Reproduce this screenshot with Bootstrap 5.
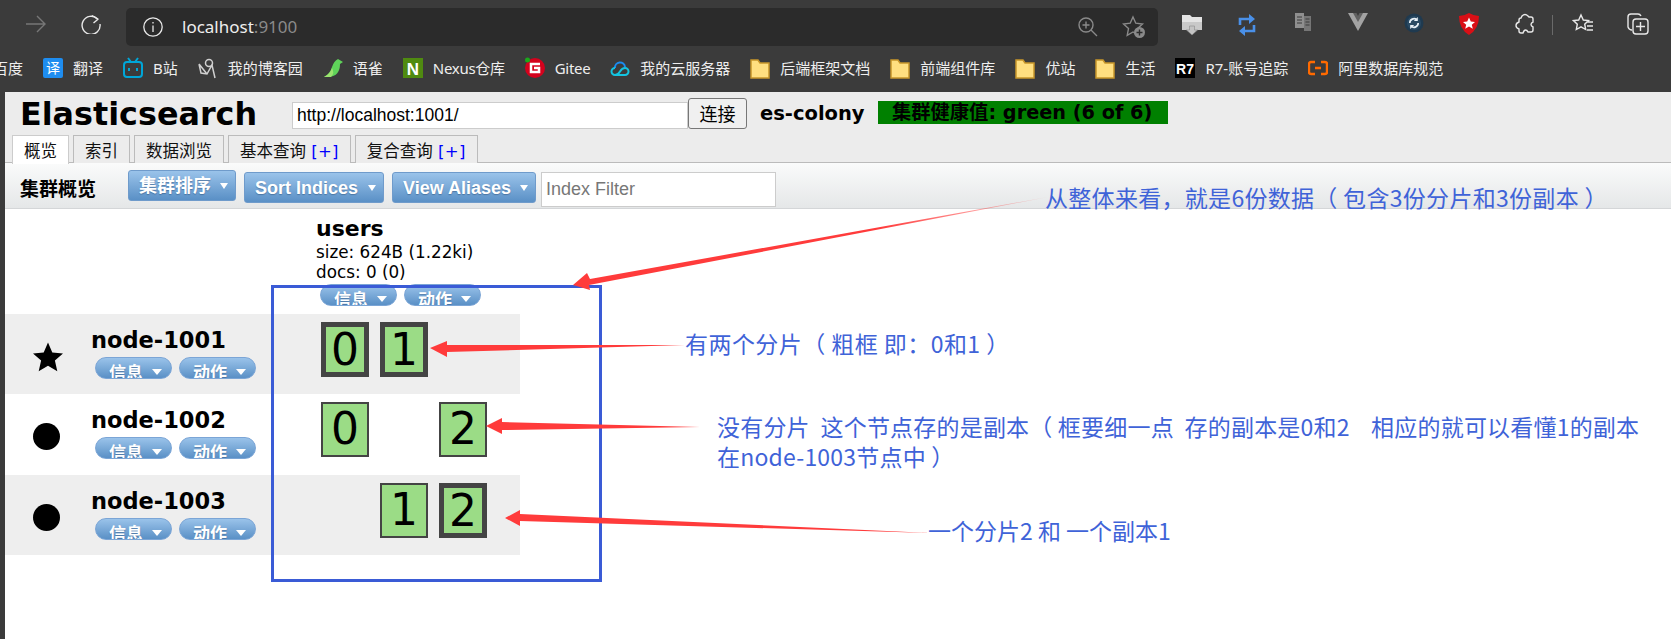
<!DOCTYPE html>
<html lang="zh-CN">
<head>
<meta charset="utf-8">
<title>Elasticsearch</title>
<link rel="stylesheet" href="https://cdn.jsdelivr.net/npm/bootstrap@5.3.0/dist/css/bootstrap.min.css">
<style>
html,body{margin:0;height:639px;overflow:hidden;background:#3b3b3b}
.stage{width:1671px;height:639px;overflow:hidden;font-family:"DejaVu Sans","Noto Sans CJK SC",sans-serif;color:#000}
.chrome{height:92px;background:#3b3b3b;color:#eee;font-family:"Noto Sans","Noto Sans CJK SC",sans-serif}
.toprow{height:47px}
.navslot{width:20px;height:20px;display:block}
.leftnav{width:126px}
.addr{width:1032px;height:38px;background:#2b2b2b;border-radius:5px;font-size:17px;margin-top:8px}
.addr .dim{color:#8a8a8a}
.extslot{width:55.5px;height:24px}
.extslot.shifted{transform:translateX(3px)}
.vsep{width:1.5px;height:20px;background:#6a6a6a;margin:0 -1px}
.bookrow{height:42px;font-size:15px;gap:20px;white-space:nowrap}
.bookrow .mk{gap:10px}
.first-mk{margin-left:-7px}
.tightword{letter-spacing:-.3px}
.bico{width:20px;height:22px;display:block;flex:none}
.pagewrap{height:547px;border-left:5px solid #3b3b3b;background:#fff}
.headzone{height:71px;background:#ececec;border-bottom:1px solid #bbb;position:relative}
.hrow{height:43px;padding-left:15px}
.brand{width:272px;margin:0;font-size:31.8px;font-weight:700;line-height:40px;font-family:"DejaVu Sans",sans-serif}
.urlbox{width:396px;height:27px;border:1px solid #ccc;background:#fff;padding:0 4px;font:17.5px "Liberation Sans",sans-serif;margin-top:3px;border-radius:0;outline:0}
.linkbtn{width:59px;height:31px;padding:0;border:1px solid #777;border-radius:3px;background:#f0f0f0;font-size:18px;line-height:26px;color:#000;margin-top:-1px;font-family:"Noto Sans CJK SC",sans-serif}
.clustername{margin-left:13px;font-size:19.5px;font-weight:700;width:105px;white-space:nowrap}
.healthbar{margin-left:13px;width:290px;height:23px;background:#008000;font-size:19.3px;font-weight:700;line-height:23px;padding-left:14px;white-space:nowrap;margin-top:-2px}
.tabline{border:0;padding-left:7px;gap:4px;height:28px;margin-bottom:-1px;flex-wrap:nowrap}
.tabline .nav-link{height:28px;padding:0 11px;font-size:16.5px;line-height:31px;margin:0;color:#111;background:#ececec;border:1px solid #bbb;border-bottom:0;border-radius:0;white-space:nowrap}
.tabline .nav-link.active{background:#fff;color:#111;height:29px;border-color:#ccc}
.tabline i{font-style:normal;color:#00f;letter-spacing:.3px}
.toolzone{height:46px;background:linear-gradient(#fafbfb,#e5e7e8);border-bottom:1px solid #d4d6d8;padding-left:15px;font-family:"Liberation Sans","Noto Sans CJK SC",sans-serif}
.tooltitle{width:108px;font-size:19px;font-weight:700;line-height:24px;margin-top:13px;white-space:nowrap;font-family:"Noto Sans CJK SC",sans-serif}
.bluebtn{height:31px;padding:1px 7px 0 10px;border:1px solid #6f9bcb;border-radius:3px;background:linear-gradient(#9ac3ea,#5a90c6);color:#fff;font-size:18px;font-weight:700;line-height:29px;text-shadow:0 1px 1px rgba(40,70,110,.45);white-space:nowrap;margin-left:8px;margin-top:9px;display:flex;align-items:center;justify-content:space-between;font-family:"Liberation Sans","Noto Sans CJK SC",sans-serif}
.bluebtn:first-of-type{margin-left:0;margin-top:7px}
.bluebtn.sortw{width:140px}
.bluebtn.sortg{width:108px}
.bluebtn.viewa{width:144px}
.bluebtn.dropdown-toggle::after{border-top:6px solid #fff;border-left:4.5px solid transparent;border-right:4.5px solid transparent;border-bottom:0;margin-left:0}
.filterbox{width:235px;height:35px;margin-left:5px;margin-top:9px;border:1px solid #ccc;background:#fff;padding:0 4px;font-size:18px;border-radius:0;outline:0}
.filterbox::placeholder{color:#777}
.idxhead{height:105px;padding-left:311px;padding-top:7px}
.idxname{font-size:22px;font-weight:700;line-height:26px}
.idxline{font-size:16.8px;line-height:20px}
.idxbtns{gap:7px;margin-top:2px;margin-left:4px}
.pillbtn{width:77px;height:22px;padding:4px 0 0 13px;border:1px solid #7ba5d6;border-radius:11px;background:linear-gradient(#9ac3ea,#5a90c6);color:#fff;font-size:17px;font-weight:700;line-height:20px;display:flex;align-items:flex-start;overflow:hidden;white-space:nowrap;text-shadow:0 1px 1px rgba(40,70,110,.4);font-family:"Noto Sans CJK SC",sans-serif}
.pillbtn.dropdown-toggle::after{border-top:6px solid #fff;border-left:5px solid transparent;border-right:5px solid transparent;border-bottom:0;margin:7px 0 0 9px;flex:none}
.noderow{height:80px;width:515px}
.noderow.tall{height:81px}
.noderow.shade{background:#eee}
.nodemark{width:86px;padding-left:28px;padding-top:28px}
.nodedot{width:27px;height:27px;border-radius:50%;background:#000;display:block;margin-top:1px}
.nodeinfo{width:230px;padding-top:11px}
.nodename{font-size:22.5px;font-weight:700;line-height:30px;white-space:nowrap}
.nodebtns{gap:7px;margin-left:4px;margin-top:2px}
.shardslots{gap:11px;padding-top:8px}
.shardbox{width:48px;height:55px;background:#9bdc86;border:2px solid #444;font-size:44px;line-height:50px;text-align:center;overflow:hidden}
.shardbox.prim{border-width:5px;line-height:45px}
.shardgap{width:48px}
.markup{position:absolute;left:0;top:0;width:1671px;height:639px;pointer-events:none}
.selframe{position:absolute;left:271px;top:285px;width:331px;height:297px;border:3px solid #3a5bd6}
.note{position:absolute;color:#3f63d8;font-family:"Noto Sans CJK SC",sans-serif;font-size:23px;line-height:30px;white-space:nowrap;margin:0}
.note1{left:1045px;top:182px;letter-spacing:.3px}
.note2{left:685px;top:328px;letter-spacing:.45px}
.note3{left:717px;top:411px;letter-spacing:.2px}
.note4{left:928px;top:515px}
.canvaswrap{position:relative;width:1671px;height:639px}
</style>
</head>
<body>
<div class="stage canvaswrap">
  <div class="chrome">
    <div class="toprow d-flex">
      <div class="leftnav d-flex align-items-center">
        <svg class="navslot" style="margin-left:26px" viewBox="0 0 20 20" fill="none" stroke="#777" stroke-width="1.4"><path d="M0 10h19M11 2l8 8-8 8"/></svg>
        <svg class="navslot" style="margin-left:35px" viewBox="0 0 20 20" fill="none" stroke="#e8e8e8" stroke-width="1.4"><path d="M16.5 5A9 9 0 1 0 19 10"/><path d="M11 1.5l6 3.700-4.500 3.800" stroke-linejoin="round" fill="none"/></svg>
      </div>
      <div class="addr d-flex align-items-center">
        <svg class="navslot" style="margin-left:17px" viewBox="0 0 20 20" fill="none" stroke="#e8e8e8" stroke-width="1.3"><circle cx="10" cy="10" r="9.200"/><path d="M10 8.500v6.500M10 5v1.500"/></svg>
        <span style="margin-left:19px">localhost<span class="dim">:9100</span></span>
        <svg class="ms-auto" width="20" height="20" viewBox="0 0 20 20" fill="none" stroke="#8a8a8a" stroke-width="1.4" style="margin-right:24px"><circle cx="8" cy="8" r="7"/><path d="M4.500 8h7M8 4.500v7M13 13l6 6"/></svg>
        <svg width="24" height="24" viewBox="0 0 24 24" fill="none" stroke="#8a8a8a" stroke-width="1.4" style="margin-right:12px"><path d="M11 2l2.800 6.200 6.700.8-4.900 4.600 1.200 6.700-5.800-3.300-5.800 3.300 1.300-6.700L1.500 9l6.700-.8z"/><circle cx="17.500" cy="17.500" r="5.500" fill="#8a8a8a" stroke="none"/><path d="M14.500 17.500h6M17.500 14.500v6" stroke="#2b2b2b"/></svg>
      </div>
      <div class="d-flex align-items-center" style="margin-top:3px;margin-left:6px">
        <div class="extslot d-flex justify-content-center"><svg width="20" height="24" viewBox="0 0 20 24"><path d="M0 2h8l2 2h10v13H0z" fill="#e4e4e4"/><path d="M0 9h20v8H0z" fill="#c9c9c9"/><path d="M7.500 13h5v4h3l-5.500 5-5.500-5h3z" fill="#c4c4c4" stroke="#8a8a8a" stroke-width=".6"/></svg></div>
        <div class="extslot d-flex justify-content-center"><svg width="18" height="24" viewBox="0 0 18 24" fill="none" stroke="#4a90e8" stroke-width="2.600"><path d="M2 12V6h12M16 12v6H4"/><path d="M11 1l6 5-6 5M7 13l-6 5 6 5" fill="#4a90e8" stroke="none"/></svg></div>
        <div class="extslot d-flex justify-content-center"><svg width="16" height="18" viewBox="0 0 16 18"><rect x="0" y="0" width="9" height="15" fill="#8f8f8f"/><rect x="9" y="3" width="7" height="15" fill="#767676"/><path d="M2 4h5M2 7h5M2 10h5M10.500 6h4M10.500 9h4M10.500 12h4" stroke="#3b3b3b"/></svg></div>
        <div class="extslot d-flex justify-content-center"><svg width="20" height="18" viewBox="0 0 20 18"><path d="M0 0h6l4 7 4-7h6L10 18z" fill="#a3a3a3"/><path d="M5 0h3.500L10 3l1.500-3H15l-5 9z" fill="#616161"/></svg></div>
        <div class="extslot d-flex justify-content-center"><svg width="20" height="20" viewBox="0 0 20 20" fill="none"><circle cx="10" cy="10" r="9.500" fill="#1f3a50"/><circle cx="10" cy="10" r="7" fill="#2a4a63"/><path d="M5.800 10A4.200 4.200 0 0 1 12.800 6.800M14.200 10A4.200 4.200 0 0 1 7.200 13.200" stroke="#e8f0f6" stroke-width="1.700"/><path d="M13.800 4v4h-4M6.200 16v-4h4" fill="#e8f0f6"/></svg></div>
        <div class="extslot d-flex justify-content-center"><svg width="20" height="22" viewBox="0 0 20 22"><path d="M0 3q5 0 10-3 5 3 10 3 0 13-10 19Q0 16 0 3z" fill="#d90f16"/><path d="M10 4.500l1.800 4 4.200.4-3.200 2.800 1 4.100-3.800-2.200-3.800 2.200 1-4.100L4 8.900l4.200-.4z" fill="#fff"/></svg></div>
        <div class="extslot d-flex justify-content-center"><svg width="20" height="22" viewBox="0 0 20 22" fill="none" stroke="#e8e8e8" stroke-width="1.400"><path d="M7 3q3-3 6 0l1 1h2q2 0 2 2v3q-2 1-2 2.500t2 2.500v3q0 2-2 2h-3q-1-2-2.500-2T8 20H6q-2 0-2-2v-2q-3-1-3-3.500T4 9V7q0-2 2-2z"/></svg></div>
        <div class="vsep"></div>
        <div class="extslot shifted d-flex justify-content-center"><svg width="22" height="22" viewBox="0 0 22 22" fill="none" stroke="#e8e8e8" stroke-width="1.400"><path d="M9 2l2.300 5 5.200.6-3.800 3.600 1 5.300L9 13.900l-4.700 2.600 1-5.300L1.500 7.600 6.700 7zM15 9h6M15 13h6M15 17h6"/></svg></div>
        <div class="extslot shifted d-flex justify-content-center"><svg width="22" height="22" viewBox="0 0 22 22" fill="none" stroke="#e8e8e8" stroke-width="1.400"><path d="M5 17Q2 17 1 14V4q0-3 3-3h7q2 0 3 2"/><rect x="6" y="6" width="15" height="15" rx="3"/><path d="M13.500 9v9M9 13.500h9"/></svg></div>
      </div>
    </div>
    <div class="bookrow d-flex align-items-center">
      <span class="first-mk">百度</span>
      <span class="mk d-flex align-items-center"><svg class="bico" viewBox="0 0 20 22"><rect y="1" width="20" height="20" rx="2" fill="#1e8df0"/><text x="10" y="16" font-size="14" fill="#fff" text-anchor="middle" font-family="Noto Sans CJK SC">译</text></svg>翻译</span>
      <span class="mk d-flex align-items-center"><svg class="bico" viewBox="0 0 20 22" fill="none" stroke="#00a6d8" stroke-width="2"><rect x="1" y="5" width="18" height="15" rx="3"/><path d="M5 1l3 4M15 1l-3 4M6 11v3M14 11v3"/></svg>B站</span>
      <span class="mk d-flex align-items-center"><svg class="bico" viewBox="0 0 20 22" fill="none" stroke="#d0d0d0" stroke-width="1.500"><circle cx="11" cy="6" r="3.500"/><path d="M1 7l2 9 6 1 5-9 3 13M1 7l8 10"/></svg>我的博客园</span>
      <span class="mk d-flex align-items-center"><svg class="bico" viewBox="0 0 20 22"><path d="M1 20Q7 17 9 10 11 4 15 2l5 3-3 2q0 12-11 13z" fill="#5fd35a"/><path d="M1 20q6-3 8-9 3 5-1 9z" fill="#9ce36f"/></svg>语雀</span>
      <span class="mk d-flex align-items-center"><svg class="bico" viewBox="0 0 20 22"><rect y="1" width="20" height="20" fill="#4f8a10"/><text x="10" y="18" font-size="17" font-weight="700" fill="#fff" text-anchor="middle" font-family="Liberation Sans">N</text></svg><span class="tightword">Nexus仓库</span></span>
      <span class="mk d-flex align-items-center"><svg class="bico" viewBox="0 0 20 22"><circle cx="10" cy="11" r="10" fill="#d4021d"/><circle cx="2.500" cy="3" r="2.500" fill="#1ba81b"/><path d="M15 7H6v8h8v-4H9" fill="none" stroke="#fff" stroke-width="2.500"/></svg><span class="tightword">Gitee</span></span>
      <span class="mk d-flex align-items-center"><svg class="bico" viewBox="0 0 20 22" fill="none" stroke-width="2"><path d="M5 11a5 5 0 0 1 10-1" stroke="#1a8cf0"/><path d="M5 18h10a3.500 3.500 0 0 0 0-7q-3 0-5 3.500T5 18a3.500 3.500 0 0 1 0-7" stroke="#14c4e0"/></svg>我的云服务器</span>
      <span class="mk d-flex align-items-center"><svg class="bico" viewBox="0 0 20 22"><path d="M1 3h7l2 3h9v15H1z" fill="#ffdf80" stroke="#c8962a" stroke-width="1.500"/></svg>后端框架文档</span>
      <span class="mk d-flex align-items-center"><svg class="bico" viewBox="0 0 20 22"><path d="M1 3h7l2 3h9v15H1z" fill="#ffdf80" stroke="#c8962a" stroke-width="1.500"/></svg>前端组件库</span>
      <span class="mk d-flex align-items-center"><svg class="bico" viewBox="0 0 20 22"><path d="M1 3h7l2 3h9v15H1z" fill="#ffdf80" stroke="#c8962a" stroke-width="1.500"/></svg>优站</span>
      <span class="mk d-flex align-items-center"><svg class="bico" viewBox="0 0 20 22"><path d="M1 3h7l2 3h9v15H1z" fill="#ffdf80" stroke="#c8962a" stroke-width="1.500"/></svg>生活</span>
      <span class="mk d-flex align-items-center"><svg class="bico" viewBox="0 0 20 22"><rect y="1" width="20" height="20" fill="#000"/><text x="10" y="17" font-size="14" font-weight="700" fill="#fff" text-anchor="middle" font-family="Liberation Sans">R7</text></svg>R7-账号追踪</span>
      <span class="mk d-flex align-items-center"><svg class="bico" viewBox="0 0 20 22" fill="none" stroke="#ff6a00" stroke-width="2.400"><path d="M7 5H3q-2 0-2 2v8q0 2 2 2h4M13 5h4q2 0 2 2v8q0 2-2 2h-4M7 11h6"/></svg>阿里数据库规范</span>
    </div>
  </div>

  <div class="pagewrap">
    <div class="headzone">
      <div class="hrow d-flex align-items-center">
        <h1 class="brand">Elasticsearch</h1>
        <input class="urlbox" type="text" value="http://localhost:1001/" aria-label="url">
        <button class="linkbtn" type="button">连接</button>
        <span class="clustername">es-colony</span>
        <span class="healthbar">集群健康值: green (6 of 6)</span>
      </div>
      <ul class="nav nav-tabs tabline">
        <li class="nav-item"><a class="nav-link active" href="#">概览</a></li>
        <li class="nav-item"><a class="nav-link" href="#">索引</a></li>
        <li class="nav-item"><a class="nav-link" href="#">数据浏览</a></li>
        <li class="nav-item"><a class="nav-link" href="#">基本查询 <i>[+]</i></a></li>
        <li class="nav-item"><a class="nav-link" href="#">复合查询 <i>[+]</i></a></li>
      </ul>
    </div>
    <div class="toolzone d-flex align-items-start">
      <div class="tooltitle">集群概览</div>
      <button class="btn dropdown-toggle bluebtn sortg" type="button">集群排序</button>
      <button class="btn dropdown-toggle bluebtn sortw" type="button">Sort Indices</button>
      <button class="btn dropdown-toggle bluebtn viewa" type="button">View Aliases</button>
      <input class="filterbox" type="text" placeholder="Index Filter" aria-label="filter">
    </div>
    <div class="idxhead">
      <div class="idxname">users</div>
      <div class="idxline">size: 624B (1.22ki)</div>
      <div class="idxline">docs: 0 (0)</div>
      <div class="idxbtns d-flex">
        <button class="btn dropdown-toggle pillbtn" type="button">信息</button>
        <button class="btn dropdown-toggle pillbtn" type="button">动作</button>
      </div>
    </div>

    <div class="noderow shade d-flex">
      <div class="nodemark"><svg width="30" height="30" viewBox="0 0 30 30" style="display:block"><path d="M15 .5l4.300 10 10.700 1-8.100 7.100 2.400 10.700L15 23.700 5.700 29.300l2.400-10.700L0 11.500l10.700-1z"/></svg></div>
      <div class="nodeinfo">
        <div class="nodename">node-1001</div>
        <div class="nodebtns d-flex">
          <button class="btn dropdown-toggle pillbtn" type="button">信息</button>
          <button class="btn dropdown-toggle pillbtn" type="button">动作</button>
        </div>
      </div>
      <div class="shardslots d-flex">
        <div class="shardbox prim">0</div>
        <div class="shardbox prim">1</div>
      </div>
    </div>

    <div class="noderow tall d-flex">
      <div class="nodemark"><span class="nodedot"></span></div>
      <div class="nodeinfo">
        <div class="nodename">node-1002</div>
        <div class="nodebtns d-flex">
          <button class="btn dropdown-toggle pillbtn" type="button">信息</button>
          <button class="btn dropdown-toggle pillbtn" type="button">动作</button>
        </div>
      </div>
      <div class="shardslots d-flex">
        <div class="shardbox">0</div>
        <div class="shardgap"></div>
        <div class="shardbox">2</div>
      </div>
    </div>

    <div class="noderow shade d-flex">
      <div class="nodemark"><span class="nodedot"></span></div>
      <div class="nodeinfo">
        <div class="nodename">node-1003</div>
        <div class="nodebtns d-flex">
          <button class="btn dropdown-toggle pillbtn" type="button">信息</button>
          <button class="btn dropdown-toggle pillbtn" type="button">动作</button>
        </div>
      </div>
      <div class="shardslots d-flex">
        <div class="shardgap"></div>
        <div class="shardbox">1</div>
        <div class="shardbox prim">2</div>
      </div>
    </div>
  </div>

  <div class="selframe"></div>
  <svg class="markup" viewBox="0 0 1671 639">
    <defs>
      <linearGradient id="fadeA" gradientUnits="userSpaceOnUse" x1="1048" y1="198" x2="880" y2="230"><stop offset="0" stop-color="#ff3b3b" stop-opacity=".15"/><stop offset="1" stop-color="#ff3b3b"/></linearGradient>
    </defs>
    <path d="M1048 197 L590 279 L587 273 L573 285 L590 290 L589 285 Z" fill="url(#fadeA)"/>
    <path d="M685 345 L447 345 L447 341 L430 348 L447 357 L447 352 Z" fill="#ff3b3b"/>
    <path d="M700 427 L502 422 L502 418 L486 426 L502 434 L502 430 Z" fill="#ff3b3b"/>
    <path d="M930 533 L520 514 L520 510 L505 518 L520 526 L520 521 Z" fill="#ff3b3b"/>
  </svg>
  <p class="note note1">从整体来看，就是6份数据（&nbsp;包含3份分片和3份副本&nbsp;）</p>
  <p class="note note2">有两个分片（&nbsp;粗框 即：0和1&nbsp;）</p>
  <p class="note note3">没有分片&nbsp;&nbsp;这个节点存的是副本（&nbsp;框要细一点&nbsp;&nbsp;存的副本是0和2&nbsp;&nbsp;&nbsp;&nbsp;相应的就可以看懂1的副本<br>在node-1003节点中&nbsp;）</p>
  <p class="note note4">一个分片2 和 一个副本1</p>
</div>
<script src="https://cdn.jsdelivr.net/npm/bootstrap@5.3.0/dist/js/bootstrap.bundle.min.js"></script>
</body>
</html>
